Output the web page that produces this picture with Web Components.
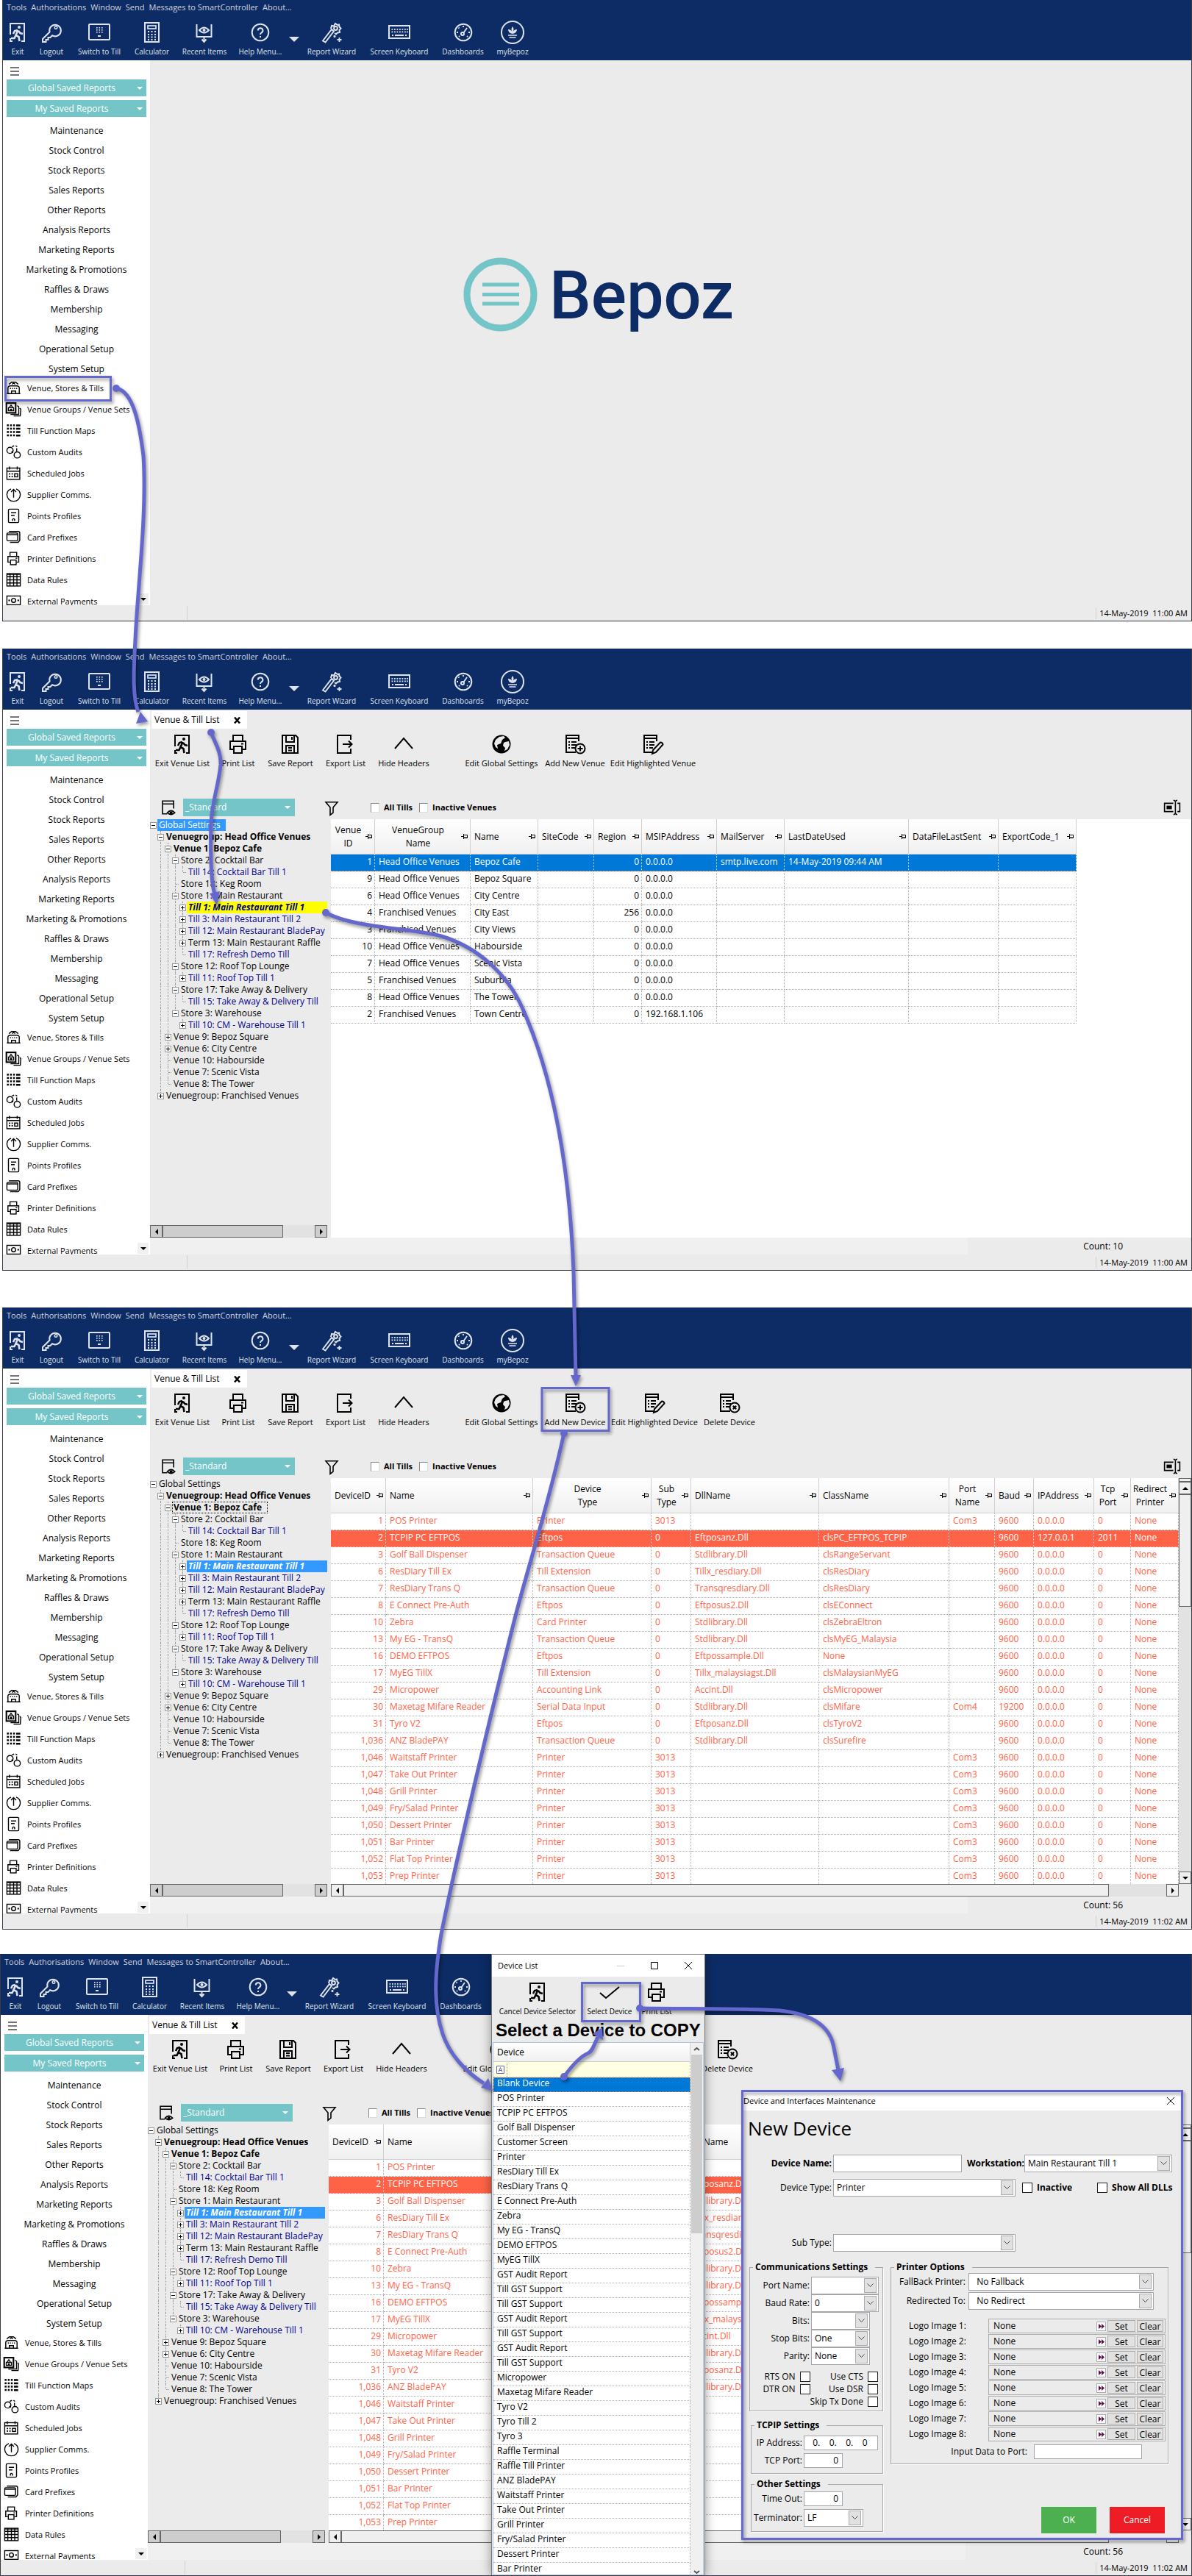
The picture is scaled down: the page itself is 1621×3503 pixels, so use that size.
<!DOCTYPE html>
<html lang="en">
<head>
<meta charset="utf-8">
<title>Bepoz BackOffice - adding a device</title>
<style>
  html, body { margin: 0; background: #fff; }
  body {
    font-family: "Open Sans", "Noto Sans", sans-serif; font-size: 12px; line-height: 16px; color: #000;
    --navy: #0d2c65; --teal: #74c5c7; --face: #ebebeb; --mark: #6468cc; --line: #b4b4b4; --small: 11px; --tiny: 10px;
  }
</style>
</head>
<body>
<bz-guide></bz-guide>

<script>
const RESET = `
  *{box-sizing:border-box}
  :host{display:block;box-sizing:border-box}
  button,input,select{font:inherit;color:inherit;margin:0;padding:0;border:0;background:none;border-radius:0;appearance:none;outline:0}
  button{display:block}
  ul{list-style:none;margin:0;padding:0}
  svg{display:block}
`;
const define = (name, render) => customElements.define(name, class extends HTMLElement {
  connectedCallback() {
    if (this.shadowRoot) return;
    this.attachShadow({ mode: 'open' }).innerHTML = render(this);
  }
});

/* ---------- icons ---------- */
const dots = (xs, ys, s = 2) => ys.map(y => xs.map(x => `<rect x="${x}" y="${y}" width="${s}" height="${s}" fill="currentColor" stroke="none"/>`).join('')).join('');
const form = `<path d="M20 11V3H3v23h13M3 7h17"/><path d="M6 12h2M6 16h2M6 20h2M10 12h7M10 16h7M10 20h5"/>`;
const ICONS = {
  exit: `<path d="M5 18V3h19v24h-4M5 23v4h3"/><circle cx="17" cy="8" r="2" fill="currentColor" stroke="none"/><path d="M15.500 12l-3 7 4 2 1 6M12.500 19l-2 4H6M15 12l-4 1-2 4M16 13l2.500 3 3.500 1" stroke-width="2.600"/>`,
  logout: `<path d="M12.500 14.500L3 24v4h4.500v-3h3v-3h3l2.500-2.800a7.800 7.800 0 1 0-3.500-4.700z"/><circle cx="21" cy="8.500" r="1.800" stroke-width="1.400"/>`,
  till: `<rect x="1" y="4" width="28" height="21" rx="1"/>${dots([11, 14.5, 18], [8, 11, 14], 1.6)}<rect x="13" y="19" width="4" height="2" fill="currentColor" stroke="none"/>`,
  calc: `<rect x="5" y="2" width="19" height="26"/><rect x="9" y="6" width="11" height="4" stroke-width="1.700"/>${dots([9, 13.5, 18], [13, 17, 20.5, 24], 2)}`,
  recent: `<path d="M4.500 4v17h20V4M14.500 21v6M11.500 24.500l3 3.500 3-3.500"/><path d="M8 12q6.500-7 13 0q-6.500 7-13 0z"/><circle cx="14.500" cy="12" r="2" fill="currentColor" stroke="none"/>`,
  help: `<circle cx="15" cy="15" r="11.300"/><path d="M11.800 12.500a3.300 3.300 0 1 1 4.600 3q-1.400.8-1.400 2.500M15 20v2"/>`,
  wizard: `<path d="M3 26.500L15 11l3 2.500L6.500 28.500z"/><path d="M14 10l1-4 3 .5L20 3l3 2 2-.5.5 3 2 2-2 2.500.500 3-3 .5-2 2-2-1.500"/><circle cx="20.500" cy="9.500" r="2.400"/><path d="M19 19v3M17.500 20.500h3M25.500 22v6M22.500 25h6" stroke-width="1.800"/>`,
  keyboard: `<rect x="1" y="6" width="28" height="17"/>${dots([4.5, 8, 11.500, 15, 18.500, 22, 25], [10, 13.500], 1.8)}<path d="M5 19h2M9 19h12M23 19h2"/>`,
  gauge: `<circle cx="15" cy="15" r="11.300"/><circle cx="14" cy="17" r="2"/><path d="M15.500 15.500L20 9M15 6v2M8.500 8.500l1 1M6 15h2M22 15h2M9 21l1-1M21 21l-1-1" stroke-width="1.800"/>`,
  mybepoz: `<circle cx="15" cy="15" r="15" stroke-width="2"/><path d="M15 7q-3 4 0 8q3-4 0-8zM9 11q0 5 6 6q6-1 6-6q-4 0-6 4q-2-4-6-4z" fill="currentColor" stroke="none"/><path d="M9 19h12M10.500 22h9" stroke-width="1.700"/>`,
  print: `<path d="M8 11V3h13v8M8 22H4V11h21v11h-4"/><rect x="9" y="18" width="11" height="9"/><path d="M19 14.500h3"/>`,
  save: `<path d="M4 3h18l3 3v21H4zM9 3v9h11V3M9 27V17h11v10M12 20h5M12 23.500h5M17 5v4"/>`,
  export: `<path d="M22 9V3H4v24h18v-6M11 15h12M19 10.500l4.500 4.500-4.500 4.500"/>`,
  up: `<path d="M3 21L15 7l12 14"/>`,
  check: `<path d="M2 16l8 7L28 8"/>`,
  globe: `<circle cx="15" cy="15" r="12.500" fill="currentColor" stroke="none"/><path d="M12 5l6-1 2 2-4 3-2 5-5 2 1 5-3-2-2-5 2-5zM20 12l5-1 1 5-3 6-4 2 1-4-3-3 1-4z" fill="var(--face,#ebebeb)" stroke="none"/>`,
  add: `${form}<circle cx="22" cy="21" r="6.500" fill="var(--face,#ebebeb)"/><path d="M22 17.500v7M18.500 21h7"/>`,
  del: `${form}<circle cx="22" cy="21" r="6.500" fill="var(--face,#ebebeb)"/><path d="M19.800 18.800l4.400 4.400M24.200 18.800l-4.400 4.400"/>`,
  edit: `${form}<path d="M14 28l1-5L25 12.500q3 0 3.500 3L19 26z" fill="var(--face,#ebebeb)"/>`,
  view: `<path d="M24 17V4H5v22h8M5 9h19"/><path d="M13 24q6.500-7 13 0q-6.500 6-13 0z" fill="var(--face,#ebebeb)"/><circle cx="19.500" cy="24" r="2.500" fill="currentColor" stroke="none"/>`,
  funnel: `<path d="M5 6h20l-7.500 9v9l-5 4V15z"/>`,
  cols: `<path d="M17 8H2v14h15M24 8h4v14h-4M20.500 4v22M17.500 2.500l3 2 3-2M17.500 27.500l3-2 3 2"/><rect x="5.500" y="12" width="9" height="6" fill="currentColor" stroke="none"/>`,
  venue: `<path d="M4 26V15q0-4 5-4h12q5 0 5 4v11h-7v-5h-8v5zM2 26h26M6 8l5-4 8 0 5 4M12 8q3-4 6 0"/>${dots([8, 12, 16, 20], [15], 2)}`,
  groups: `<rect x="1" y="3" width="18" height="19" stroke-width="3"/><path d="M5 18v-6h10v6zM7 11l3-4 3 4M9 18v-3h2v3M22 8l3 2v15L9 25M27 13l2 2-1 13-13 0"/>`,
  maps: `${dots([2, 8, 14], [3, 9.500, 16, 22.500], 3.600)}<path d="M20 5h8M20 11.500h8M20 18h8M20 24.500h8" stroke-width="3.600"/>`,
  audits: `<circle cx="8" cy="12" r="6"/><circle cx="22" cy="21" r="6"/><path d="M12 5l4-2M19 3l3 2M21 8v6"/><circle cx="12.500" cy="15.500" r="1"/>`,
  jobs: `<rect x="2" y="5" width="25" height="22"/><path d="M2 11h25M7 2v6M22 2v6"/><rect x="17" y="16" width="6" height="6"/>${dots([6, 11], [15, 20], 2.600)}`,
  supplier: `<path d="M10 4q-8 3-8 11.500A12.500 12.500 0 0 0 15 28a12.500 12.500 0 0 0 13-12.500Q28 7 20 4M15 21V5M10 10l5-5 5 5"/>`,
  points: `<rect x="5" y="2" width="20" height="26" rx="2"/><path d="M10 9h10M10 14h7M13 25v-3q2-3 4 0v3"/>`,
  cards: `<path d="M6 4h18q3 0 3 3M27 7v14l-3 4H8"/><rect x="2" y="7" width="21" height="15" rx="2"/><path d="M2 10h21"/>`,
  rules: `<rect x="2" y="3" width="26" height="24" /><path d="M2 9h26M2 15h26M2 21h26M8 3v24M15 3v24M21.500 3v24M2 4.500h26"/>`,
  pay: `<rect x="2" y="5" width="26" height="17"/><circle cx="15" cy="13.500" r="4"/>${dots([5, 22.500], [12], 3)}<path d="M10 26h10"/>`
};
define('bz-icon', el => `<style>${RESET}svg{width:100%;height:100%;overflow:visible}</style>
  <svg viewBox="0 0 30 30" fill="none" stroke="currentColor" stroke-width="2" aria-hidden="true">${ICONS[el.getAttribute('name')] || ''}</svg>`);

/* ---------- icon-over-label button ---------- */
define('bz-tool', el => `<style>${RESET}
  :host{width:var(--w);flex:none;font-size:var(--tool,var(--small))}
  button{width:100%;display:flex;flex-direction:column;align-items:center;gap:3px;white-space:nowrap;line-height:16px}
  bz-icon{width:30px;height:30px}
  span{display:block}
  </style><button type="button"><bz-icon name="${el.getAttribute('icon')}"></bz-icon><span><slot></slot></span></button>`);
const tool = ([icon, label, w]) => icon ? `<bz-tool icon="${icon}" style="--w:${w}px">${label}</bz-tool>` : `<i style="width:${w}px" class="${label}"></i>`;

/* ---------- top bar ---------- */
define('bz-topbar', () => `<style>${RESET}
  :host{background:var(--navy);color:#dfe3ec;height:83px}
  nav{display:flex;gap:6px;padding:0 5px;height:22px;align-items:center;font-size:var(--small);color:#cfd4df}
  .tools{display:flex;padding-top:8px;--tool:var(--tiny)}
  .arrow{align-self:center;margin-bottom:8px;height:0;display:flex;justify-content:center}
  .arrow::before{content:"";border:7px solid transparent;border-top:7px solid #dfe3ec;border-bottom:0}
  </style>
  <nav>${['Tools', 'Authorisations', 'Window', 'Send', 'Messages to SmartController', 'About...'].map(t => `<button type="button">${t}</button>`).join('')}</nav>
  <div class="tools">${[['exit', 'Exit', 40], ['logout', 'Logout', 52], ['till', 'Switch to Till', 78], ['calc', 'Calculator', 65], ['recent', 'Recent Items', 78], ['help', 'Help Menu...', 74],
    ['', 'arrow', 17], ['wizard', 'Report Wizard', 86], ['keyboard', 'Screen Keyboard', 98], ['gauge', 'Dashboards', 75], ['mybepoz', 'myBepoz', 60]].map(tool).join('')}</div>`);

/* ---------- left menu ---------- */
const CATS = ['Maintenance', 'Stock Control', 'Stock Reports', 'Sales Reports', 'Other Reports', 'Analysis Reports', 'Marketing Reports', 'Marketing &amp; Promotions', 'Raffles &amp; Draws', 'Membership', 'Messaging', 'Operational Setup', 'System Setup'];
const ITEMS = [['venue', 'Venue, Stores &amp; Tills'], ['groups', 'Venue Groups / Venue Sets'], ['maps', 'Till Function Maps'], ['audits', 'Custom Audits'], ['jobs', 'Scheduled Jobs'], ['supplier', 'Supplier Comms.'],
  ['points', 'Points Profiles'], ['cards', 'Card Prefixes'], ['print', 'Printer Definitions'], ['rules', 'Data Rules'], ['pay', 'External Payments']];
define('bz-sidebar', () => `<style>${RESET}
  :host{background:#fff;width:200px;flex:none;position:relative;overflow:hidden}
  .burger{display:grid;gap:3px;width:12px;margin:9px 10px 5px}
  .burger i{height:2px;background:#757575}
  .saved{width:190px;height:23px;margin:0 5px 5px;background:var(--teal);color:#fff;display:flex;align-items:center;padding-right:5px}
  .saved span{flex:1;text-align:center}
  .saved::after,.down::before{content:"";border:4px solid transparent;border-top:4px solid #fff;border-bottom:0}
  .cats{margin-bottom:-2px}
  .cats button{width:100%;height:27px;text-align:center}
  .items button{display:flex;align-items:center;gap:8px;width:100%;height:29px;padding-left:4px;font-size:var(--small);white-space:nowrap}
  .items bz-icon{width:21px;height:21px;flex:none}
  .down{position:absolute;right:2px;bottom:1px;width:15px;height:15px;background:#f0f0f0;display:grid;place-items:center}
  .down::before{border-top-color:#000}
  </style>
  <button class="burger" type="button" aria-label="Menu"><i></i><i></i><i></i></button>
  <button class="saved" type="button"><span>Global Saved Reports</span></button>
  <button class="saved" type="button"><span>My Saved Reports</span></button>
  <ul class="cats">${CATS.map(c => `<li><button type="button">${c}</button></li>`).join('')}</ul>
  <ul class="items">${ITEMS.map(([i, t]) => `<li><button type="button"><bz-icon name="${i}"></bz-icon>${t}</button></li>`).join('')}</ul>
  <button class="down" type="button" aria-label="Scroll down"></button>`);

/* ---------- application window ---------- */
define('bz-window', el => `<style>${RESET}
  :host{height:846px;background:var(--face);border:1px solid #3a3a44;border-top:0;display:flex;flex-direction:column;position:relative;overflow:hidden}
  .mid{flex:1;display:flex;min-height:0}
  .main{flex:1;min-width:0;display:flex;flex-direction:column}
  footer{height:21px;display:flex;align-items:center;justify-content:space-between;font-size:var(--small);white-space:nowrap}
  footer::before{content:"";width:250px;height:19px;border-right:1px solid #d2d2d2}
  footer span{border-left:1px solid #d2d2d2;padding:0 5px 0 4px}
  </style>
  <bz-topbar></bz-topbar>
  <div class="mid"><bz-sidebar></bz-sidebar><div class="main"><slot></slot></div></div>
  <footer><span>14-May-2019&nbsp; ${el.getAttribute('time')}</span></footer>
  <slot name="dialog"></slot>`);

define('bz-logo', () => `<style>${RESET}
  :host{flex:1;display:flex;align-items:flex-start;justify-content:center;gap:16px;padding:268px 196px 0 0;color:var(--navy)}
  svg{width:101px;height:101px;flex:none}
  b{font:500 90px/106px Roboto,sans-serif}
  </style><svg viewBox="0 0 101 101" fill="none" stroke="#74c5c7" aria-hidden="true"><circle cx="50.500" cy="50.500" r="45.500" stroke-width="9"/><path d="M26 37h50M26 50.500h50M26 63h50" stroke-width="5"/></svg><b>Bepoz</b>`);

/* ---------- scroll bar: start and size of the thumb in pixels ---------- */
define('bz-scroll', el => {
  const v = el.hasAttribute('vertical');
  return `<style>${RESET}
  :host{display:flex;flex-direction:${v ? 'column' : 'row'};${v ? 'width' : 'height'}:17px;background:#e2e2e2;flex:none}
  i{flex:none;background:var(--thumb,#efefef);border:1px solid #666}
  .b{width:17px;height:17px;display:grid;place-items:center}
  .b::before{content:"";border:4px solid transparent}
  .s::before{border-${v ? 'bottom' : 'right'}-color:#000;border-${v ? 'top' : 'left'}-width:0}
  .e::before{border-${v ? 'top' : 'left'}-color:#000;border-${v ? 'bottom' : 'right'}-width:0}
  .t{${v ? 'height' : 'width'}:${el.getAttribute('thumb')}}
  em{flex:1}
  </style>${v ? '<i style="height:5px"></i>' : ''}<i class="b s"></i><i class="t"></i><em></em><i class="b e"></i>`;
});

/* ---------- tree ---------- */
const TREE = [
  [0, '-', 'Global Settings'], [1, '-', 'Venuegroup: Head Office Venues', 'bold'], [2, '-', 'Venue 1: Bepoz Cafe', 'bold cafe'],
  [3, '-', 'Store 2: Cocktail Bar'], [4, '', 'Till 14: Cocktail Bar Till 1', 'till'], [3, '', 'Store 18: Keg Room'], [3, '-', 'Store 1: Main Restaurant'],
  [4, '+', 'Till 1: Main Restaurant Till 1', 'till current'], [4, '+', 'Till 3: Main Restaurant Till 2', 'till'], [4, '+', 'Till 12: Main Restaurant BladePay', 'till'],
  [4, '+', 'Term 13: Main Restaurant Raffle'], [4, '', 'Till 17: Refresh Demo Till', 'till'], [3, '-', 'Store 12: Roof Top Lounge'], [4, '+', 'Till 11: Roof Top Till 1', 'till'],
  [3, '-', 'Store 17: Take Away &amp; Delivery'], [4, '', 'Till 15: Take Away &amp; Delivery Till', 'till'], [3, '-', 'Store 3: Warehouse'], [4, '+', 'Till 10: CM - Warehouse Till 1', 'till'],
  [2, '+', 'Venue 9: Bepoz Square'], [2, '+', 'Venue 6: City Centre'], [2, '', 'Venue 10: Habourside'], [2, '', 'Venue 7: Scenic Vista'], [2, '', 'Venue 8: The Tower'], [1, '+', 'Venuegroup: Franchised Venues']
];
const continues = (row, level) => {
  for (let r = row + 1; r < TREE.length && TREE[r][0] >= level; r++) if (TREE[r][0] === level) return true;
  return false;
};
define('bz-tree', el => `<style>${RESET}
  :host{width:241px;flex:none;display:flex;flex-direction:column;overflow:hidden;margin-right:5px}
  ul{flex:1}
  li{display:flex;height:16px;white-space:nowrap}
  .g{width:10px;flex:none;position:relative}
  .v::before{content:"";position:absolute;left:4px;top:0;bottom:0;border-left:1px dotted #999}
  .last::before{bottom:8px}
  .leaf::after{content:"";position:absolute;left:5px;right:1px;top:8px;border-top:1px dotted #999}
  .box{position:absolute;left:0;top:4px;width:9px;height:9px;border:1px solid #999;background:#fff}
  .box::before,.box.plus::after{content:"";position:absolute;background:#000;left:1px;top:3px;width:5px;height:1px}
  .box.plus::after{left:3px;top:1px;width:1px;height:5px}
  .t{padding:0 2px;line-height:15px}
  .bold .t{font-weight:700}
  .till .t{color:#00008b}
  .current .t{flex:1;font-weight:700;font-style:italic;background:#ff0}
  .sel0 .root .t{background:#39f;color:#fff;padding-right:7px}
  .sel1 .current .t{background:#39f;color:#fff}
  .focus .cafe .t{outline:1px dotted #000;outline-offset:-1px;padding-right:8px}
  bz-scroll{--thumb:#cdcdcd}
  </style><ul class="${el.getAttribute('state')}">${TREE.map(([lv, sign, text, cls = ''], r) => {
    let g = '';
    for (let k = 0; k < lv; k++) g += `<span class="g ${k && continues(r, k) ? 'v' : ''}"></span>`;
    g += `<span class="g ${lv ? 'v' : ''} ${continues(r, lv) ? '' : 'last'} ${sign ? '' : 'leaf'}">${sign ? `<i class="box ${sign === '+' ? 'plus' : ''}"></i>` : ''}</span>`;
    return `<li class="${cls} ${lv ? '' : 'root'}">${g}<span class="t">${text}</span></li>`;
  }).join('')}</ul><bz-scroll thumb="164px"></bz-scroll>`);

/* ---------- data grid ---------- */
const h = (w, label, opt = '') => ({ w, label, opt });
const VENUES = {
  cols: [h(60, 'Venue<br>ID', 'c r'), h(130, 'VenueGroup<br>Name', 'c'), h(92, 'Name'), h(76, 'SiteCode'), h(65, 'Region', 'r'), h(102, 'MSIPAddress'), h(92, 'MailServer'), h(169, 'LastDateUsed'), h(122, 'DataFileLastSent'), h(106, 'ExportCode_1')],
  rows: [[1, 'H', 'Bepoz Cafe', 0, '0.0.0.0', 'smtp.live.com', '14-May-2019 09:44 AM'], [9, 'H', 'Bepoz Square'], [6, 'H', 'City Centre'], [4, 'F', 'City East', 256], [3, 'F', 'City Views'], [10, 'H', 'Habourside'],
    [7, 'H', 'Scenic Vista'], [5, 'F', 'Suburbia'], [8, 'H', 'The Tower'], [2, 'F', 'Town Centre', 0, '192.168.1.106']]
    .map(([id, g, n, reg = 0, ip = '0.0.0.0', mail = '', last = '']) => [id, g === 'H' ? 'Head Office Venues' : 'Franchised Venues', n, '', reg, ip, mail, last, '', '']),
  selected: 0
};
const dev = (id, n, type, dll = '', cls = '', port = '', baud = '9600', ip = '0.0.0.0', tcp = '0') => [id, n, type, dll ? '0' : '3013', dll, cls, port, baud, ip, tcp, 'None'];
const prn = (id, n) => dev(id, n, 'Printer', '', '', 'Com3');
const DEVICES = {
  cols: [h(75, 'DeviceID', 'r'), h(200, 'Name'), h(161, 'Device<br>Type', 'c'), h(54, 'Sub<br>Type', 'c'), h(174, 'DllName'), h(177, 'ClassName'), h(62, 'Port<br>Name', 'c'), h(53, 'Baud'), h(82, 'IPAddress'), h(50, 'Tcp<br>Port', 'c'), h(0, 'Redirect<br>Printer', 'c')],
  rows: [prn(1, 'POS Printer'), dev(2, 'TCPIP PC EFTPOS', 'Eftpos', 'Eftposanz.Dll', 'clsPC_EFTPOS_TCPIP', '', '9600', '127.0.0.1', '2011'),
    dev(3, 'Golf Ball Dispenser', 'Transaction Queue', 'Stdlibrary.Dll', 'clsRangeServant'), dev(6, 'ResDiary Till Ex', 'Till Extension', 'Tillx_resdiary.Dll', 'clsResDiary'),
    dev(7, 'ResDiary Trans Q', 'Transaction Queue', 'Transqresdiary.Dll', 'clsResDiary'), dev(8, 'E Connect Pre-Auth', 'Eftpos', 'Eftposus2.Dll', 'clsEConnect'),
    dev(10, 'Zebra', 'Card Printer', 'Stdlibrary.Dll', 'clsZebraEltron'), dev(13, 'My EG - TransQ', 'Transaction Queue', 'Stdlibrary.Dll', 'clsMyEG_Malaysia'),
    dev(16, 'DEMO EFTPOS', 'Eftpos', 'Eftpossample.Dll', 'None'), dev(17, 'MyEG TillX', 'Till Extension', 'Tillx_malaysiagst.Dll', 'clsMalaysianMyEG'),
    dev(29, 'Micropower', 'Accounting Link', 'Accint.Dll', 'clsMicropower'), dev(30, 'Maxetag Mifare Reader', 'Serial Data Input', 'Stdlibrary.Dll', 'clsMifare', 'Com4', '19200'),
    dev(31, 'Tyro V2', 'Eftpos', 'Eftposanz.Dll', 'clsTyroV2'), dev('1,036', 'ANZ BladePAY', 'Transaction Queue', 'Stdlibrary.Dll', 'clsSurefire'),
    ...['Waitstaff', 'Take Out', 'Grill', 'Fry/Salad', 'Dessert', 'Bar', 'Flat Top', 'Prep'].map((n, i) => prn('1,0' + (46 + i), n + ' Printer'))],
  selected: 1
};
const PIN = `<svg width="9" height="9" viewBox="0 0 9 9" fill="none" stroke="#000" aria-hidden="true"><path d="M0 4.500h3M3.500 1v7M3.500 2.500h5v4h-5" /><path d="M3.500 6h5"/></svg>`;
define('bz-grid', el => {
  const devices = el.getAttribute('kind') === 'devices', d = devices ? DEVICES : VENUES;
  return `<style>${RESET}
  :host{flex:1;min-width:0;background:#fff;display:flex;overflow:hidden}
  .col{flex:1;min-width:0;display:flex;flex-direction:column}
  .view{flex:1;min-height:0;overflow:hidden}
  table{border-collapse:separate;border-spacing:0;table-layout:fixed;width:${devices ? '100%' : d.cols.reduce((s, c) => s + c.w, 0) + 'px'}}
  th{height:48px;padding:0 3px 0 5px;font-weight:400;text-align:left;background:linear-gradient(#fff,#f0f0f0);border-right:1px solid #d0d0d0;border-bottom:1px solid #d0d0d0;line-height:18px;white-space:nowrap}
  th div{display:flex;align-items:center;gap:2px} th span{flex:1} th svg{flex:none}
  th.c{padding-left:2px} th.c span{text-align:center}
  td{height:23px;padding:0 0 3px 5px;line-height:18px;white-space:nowrap;overflow:hidden;border-right:1px dotted #b0b0b0;border-bottom:1px dotted #b0b0b0}
  td.r{text-align:right;padding:0 3px 3px 0}
  .devices td{color:#ff6347}
  .sel td{background:#0078d7;color:#fff;border-bottom-color:#e8853a;border-right-color:#cde}
  .devices .sel td{background:#ff6347;color:#fff;border-bottom-color:#ffb0a0}
  .side{width:17px;display:flex;flex-direction:column}.side bz-scroll{flex:1}.side::after{content:"";height:17px;background:var(--face)}
  </style><div class="col"><div class="view"><table class="${devices ? 'devices' : ''}">
  <colgroup>${d.cols.map(c => `<col${c.w ? ` style="width:${c.w}px"` : ''}>`).join('')}</colgroup>
  <thead><tr>${d.cols.map(c => `<th class="${c.opt.includes('c') ? 'c' : ''}"><div><span>${c.label}</span>${PIN}</div></th>`).join('')}</tr></thead>
  <tbody>${d.rows.map((r, i) => `<tr class="${i === d.selected ? 'sel' : ''}">${r.map((v, k) => `<td class="${d.cols[k].opt.includes('r') ? 'r' : ''}">${v}</td>`).join('')}</tr>`).join('')}</tbody>
  </table></div>${devices ? '<bz-scroll thumb="calc(100% - 112px)"></bz-scroll>' : ''}</div>${devices ? '<div class="side"><bz-scroll vertical thumb="153px"></bz-scroll></div>' : ''}`;
});

/* ---------- Venue & Till List page ---------- */
define('bz-venues', el => {
  const devices = el.getAttribute('kind') === 'devices';
  const tools = [['exit', 'Exit Venue List', 88], ['print', 'Print List', 64], ['save', 'Save Report', 78], ['export', 'Export List', 72], ['up', 'Hide Headers', 86], ['', '', 32], ['globe', 'Edit Global Settings', 116]]
    .concat(devices ? [['add', 'Add New Device', 84], ['edit', 'Edit Highlighted Device', 132], ['del', 'Delete Device', 72]] : [['add', 'Add New Venue', 84], ['edit', 'Edit Highlighted Venue', 128]]);
  return `<style>${RESET}
  :host{flex:1;min-height:0;display:flex;flex-direction:column;padding-top:2px}
  .tab{display:flex;align-items:center;width:130px;height:24px;margin-left:2px;padding:0 4px;background:#fff;gap:20px;white-space:nowrap}
  .tab svg{width:9px;height:9px}
  .tools{display:flex;padding-top:6px;height:95px}
  .filter{display:flex;align-items:center;height:24px;margin-bottom:4px;font-weight:700;white-space:nowrap;font-size:var(--small)}
  .filter>bz-icon{width:24px;height:24px;flex:none}
  .filter>.view{margin:0 8px 0 13px}
  .std{display:flex;align-items:center;width:152px;height:24px;background:var(--teal);color:#fff;padding:0 6px 0 3px;font-weight:400;font-size:12px}
  .std select{flex:1;height:24px;line-height:22px}.std::after{content:"";border:4px solid transparent;border-top:4px solid #fff;border-bottom:0}
  .filter>.fun{margin:0 41px 0 38px}
  label{display:flex;align-items:center;gap:6px;margin-right:9px}
  input{width:12px;height:13px;background:#fff;border:1px solid #888;border-right-color:#ddd;border-bottom-color:#ddd}
  .filter>.right{margin:0 14px 0 auto}
  .body{flex:1;display:flex;min-height:0}
  .count{height:23px;background:linear-gradient(90deg,#f0f0f0 1112px,transparent 0);display:flex;justify-content:flex-end;align-items:center;padding-right:93px}
  </style>
  <div class="tab"><span>Venue &amp; Till List</span><svg viewBox="0 0 9 9" stroke="#000" stroke-width="2.400" aria-hidden="true"><path d="M1 .5l7 8M8 .5l-7 8"/></svg></div>
  <div class="tools">${tools.map(tool).join('')}</div>
  <div class="filter"><bz-icon class="view" name="view"></bz-icon><span class="std"><select aria-label="Layout"><option>_Standard</option></select></span><bz-icon class="fun" name="funnel"></bz-icon>
    <label><input type="checkbox">All Tills</label><label><input type="checkbox">Inactive Venues</label><bz-icon class="right" name="cols"></bz-icon></div>
  <div class="body"><bz-tree state="${el.getAttribute('state')}"></bz-tree><bz-grid kind="${el.getAttribute('kind')}"></bz-grid></div>
  <div class="count"><span>Count: ${devices ? 56 : 10}</span></div>`;
});

/* ---------- Device List dialog ---------- */
const CLOSE = `<svg width="12" height="12" viewBox="0 0 12 12" stroke="#000" aria-hidden="true"><path d="M1 1l10 10M11 1L1 11"/></svg>`;
const LIST = ['Blank Device', 'POS Printer', 'TCPIP PC EFTPOS', 'Golf Ball Dispenser', 'Customer Screen', 'Printer', 'ResDiary Till Ex', 'ResDiary Trans Q', 'E Connect Pre-Auth', 'Zebra', 'My EG - TransQ', 'DEMO EFTPOS', 'MyEG TillX',
  'GST Audit Report', 'Till GST Support', 'Till GST Support', 'GST Audit Report', 'Till GST Support', 'GST Audit Report', 'Till GST Support', 'Micropower', 'Maxetag Mifare Reader', 'Tyro V2', 'Tyro Till 2', 'Tyro 3',
  'Raffle Terminal', 'Raffle Till Printer', 'ANZ BladePAY', 'Waitstaff Printer', 'Take Out Printer', 'Grill Printer', 'Fry/Salad Printer', 'Dessert Printer', 'Bar Printer'];
define('bz-device-list', () => `<style>${RESET}
  :host{position:absolute;left:667px;top:0;bottom:0;width:291px;background:var(--face);border:1px solid #777;border-bottom:0;box-shadow:0 2px 14px #0006;display:flex;flex-direction:column;overflow:hidden}
  header{display:flex;align-items:center;height:30px;flex:none;background:#fff;padding:0 16px 0 8px;font-size:var(--small)}
  header span{flex:1}
  header button{width:46px;display:grid;justify-content:end}
  .tools{display:flex;padding:6px 0 0 1px;flex:none;--tool:var(--tiny)}
  h2{font:700 24px/28px "Liberation Sans",Arial,sans-serif;margin:4px 0 2px 5px;white-space:nowrap;flex:none}
  .list{display:flex;flex:1;min-height:0;border:1px solid #a9c6e6;margin:0 1px}
  .view{flex:1;overflow:hidden;background:#fff}
  table{width:100%;border-collapse:separate;border-spacing:0}
  th{height:26px;text-align:left;font-weight:400;background:linear-gradient(#fff,#f0f0f0);border-bottom:1px solid #d0d0d0;border-right:1px solid #d0d0d0;padding:0 5px}
  td{height:20px;padding:0 5px 3px;line-height:16px;border-bottom:1px dotted #b0b0b0;border-right:1px dotted #b0b0b0;white-space:nowrap}
  .find td{background:#ffffe1;height:21px;padding:0 4px}
  .find i{display:block;width:15px;height:19px;border-right:1px dotted #999;padding:4px 4px 0 0}
  .sel td{background:#0078d7;color:#fff;outline:1px dotted #e8853a;outline-offset:-1px}
  .bar{width:17px;background:#f0f0f0;display:flex;flex-direction:column;align-items:center;padding-top:5px}
  .bar b{width:15px;height:243px;background:#cdcdcd;margin:4px 0 auto}
  </style>
  <header><span>Device List</span><button type="button" aria-label="Minimise"><svg width="12" height="12" viewBox="0 0 12 12" stroke="#ccc"><path d="M1 6.500h10"/></svg></button><button type="button" aria-label="Maximise"><svg width="12" height="12" viewBox="0 0 12 12" fill="none" stroke="#000"><path d="M1.500 1.500h9v9h-9z"/></svg></button><button type="button" aria-label="Close">${CLOSE}</button></header>
  <div class="tools">${[['exit', 'Cancel Device Selector', 122], ['check', 'Select Device', 74], ['print', 'Print List', 54]].map(tool).join('')}</div>
  <h2>Select a Device to COPY</h2>
  <div class="list"><div class="view"><table><thead><tr><th>Device</th></tr></thead><tbody>
    <tr class="find"><td><i><svg width="11" height="11" viewBox="0 0 11 11" fill="none" stroke="#5a62c8"><path d="M.5.500h10v10H.5zM3 8.500L5.500 2.500 8 8.500M4 6.500h3"/></svg></i></td></tr>
    ${LIST.map((t, i) => `<tr class="${i ? '' : 'sel'}"><td>${t}</td></tr>`).join('')}</tbody></table></div>
    <div class="bar"><svg width="9" height="7" viewBox="0 0 9 7" fill="none" stroke="#555" stroke-width="2"><path d="M1 5l3.500-3L8 5"/></svg><b></b><svg width="9" height="7" viewBox="0 0 9 7" fill="none" stroke="#555" stroke-width="2"><path d="M1 2l3.500 3L8 2"/></svg></div></div>`);

/* ---------- New Device dialog ---------- */
let uid = 0;
const pick = (label, value, w, cls = '') => { const id = 'f' + ++uid; return `<label class="l" for="${id}">${label}</label><span class="pick ${cls}" style="width:${w}px"><select id="${id}"><option>${value}</option></select><i><svg width="9" height="6" viewBox="0 0 9 6" fill="none" stroke="#444"><path d="M.5.500l4 4 4-4"/></svg></i></span>`; };
const box = (label, value, w, cls = '') => { const id = 'f' + ++uid; return `<label class="l" for="${id}">${label}</label><input class="box ${cls}" id="${id}" type="text" value="${value}" style="width:${w}px">`; };
define('bz-device-form', () => `<style>${RESET}
  :host{position:absolute;left:1007px;top:186px;width:601px;height:611px;background:var(--face);border:1px solid #777;padding-bottom:1px}
  header{display:flex;align-items:center;justify-content:space-between;height:26px;background:#fff;padding:0 10px 0 2px;font-size:var(--small)}
  h2{font-size:26px;line-height:36px;font-weight:400;margin:6px 0 18px 8px}
  .row{display:flex;align-items:center;height:24px;gap:2px;margin-bottom:9px}
  .l{white-space:nowrap;text-align:right;width:var(--lw);flex:none}
  .b .l,.chk{font-weight:700}
  .wide{--lw:122px}
  .pick{display:flex;align-items:center;height:24px;border:1px solid #a5a5ad;background:#fff;padding:1px 2px 1px 4px;flex:none;font-weight:400}
  .pick select{flex:1;min-width:0;height:100%}
  .pick i{width:17px;height:20px;background:#e1e1e1;border:1px solid #adadad;display:grid;place-items:center}
  .box{height:20px;border:1px solid #a5a5ad;background:#fff;padding:0 5px;flex:none}
  .tall{height:24px}.num{text-align:right}
  .chk{display:flex;align-items:center;gap:6px;white-space:nowrap}
  input[type=checkbox]{width:14px;height:14px;border:1px solid #222;background:#fff;flex:none}
  .cols{display:flex;gap:10px;padding:0 19px 0 10px;align-items:flex-start}
  .left{width:182px}.right{flex:1}
  fieldset{border:1px solid #a8a8a8;box-shadow:1px 1px 0 #fff;margin:0;padding:0;min-width:0}
  .left fieldset+fieldset{margin-left:2px}
  legend{font-weight:700;line-height:16px;padding:0 10px 0 3px;margin-left:4px}
  fieldset .row{margin:0}
  .comm{padding:5px 0 4px;--lw:81px;margin-bottom:11px}
  .checks{display:grid;grid-template-columns:1fr 1fr;row-gap:1px;padding:8px 6px 0 0;justify-items:end}
  .checks .chk{font-weight:400;height:16px}
  .tcp{padding:5px 0 7px;--lw:69px;margin-bottom:6px}
  .tcp .row,.other .row{height:21px}
  .tcp .row+.row{margin-top:3px}
  .other{padding:1px 0 6px;--lw:69px}.other .row+.row{height:24px;margin-top:4px}
  .opts{--lw:101px;padding-bottom:6px}
  .opts .row{gap:4px;margin-bottom:2px}
  .logos{display:grid;padding:10px 3px 3px 24px}
  .logo{display:flex;justify-content:space-between;height:21px;line-height:20px}
  .logo>span:last-child{display:flex;align-items:center;gap:2px;width:241px;height:20px;border:1px solid #adadad;padding:0 2px 0 6px;line-height:16px}
  .logo em{flex:1;font-style:normal}
  .logo button{height:16px;border:1px solid #adadad;background:#e1e1e1;line-height:13px;text-align:center}
  .logo .go{width:13px;height:13px;background:#fff;display:grid;place-items:center}
  .opts .port{height:20px;gap:9px;--lw:auto;justify-content:flex-end;padding-right:35px;margin:0}
  footer{display:flex;justify-content:flex-end;gap:18px;padding:0 5px 0 0;margin-top:58px}
  footer button{width:75px;height:36px;color:#fff;text-align:center;background:#4caf50}
  footer .no{background:#ee1c25}
  </style>
  <header><span>Device and Interfaces Maintenance</span><button type="button" aria-label="Close">${CLOSE}</button></header>
  <h2>New Device</h2>
  <div class="row wide b">${box('Device Name:', '', 175, 'tall')}<span style="width:3px"></span><span style="--lw:76px;display:flex;align-items:center;gap:2px">${pick('Workstation:', 'Main Restaurant Till 1', 201)}</span></div>
  <div class="row wide">${pick('Device Type:', 'Printer', 248)}<label class="chk" style="margin:0 32px 0 7px"><input type="checkbox">Inactive</label><label class="chk"><input type="checkbox">Show All DLLs</label></div>
  <div class="row wide" style="margin:51px 0 13px">${pick('Sub Type:', '', 248)}</div>
  <div class="cols">
    <div class="left">
      <fieldset class="comm"><legend>Communications Settings</legend>
        <div class="row">${pick('Port Name:', '', 92)}</div><div class="row">${pick('Baud Rate:', '0', 92)}</div><div class="row">${pick('Bits:', '', 80)}</div><div class="row">${pick('Stop Bits:', 'One', 80)}</div><div class="row">${pick('Parity:', 'None', 80)}</div>
        <div class="checks"><label class="chk">RTS ON<input type="checkbox"></label><label class="chk">Use CTS<input type="checkbox"></label><label class="chk">DTR ON<input type="checkbox"></label><label class="chk">Use DSR<input type="checkbox"></label><span></span><label class="chk">Skip Tx Done<input type="checkbox"></label></div>
      </fieldset>
      <fieldset class="tcp"><legend>TCPIP Settings</legend><div class="row">${box('IP Address:', '&nbsp; 0.&nbsp;&nbsp;  0.&nbsp;&nbsp;  0.&nbsp;&nbsp;  0', 101)}</div><div class="row">${box('TCP Port:', '0', 53, 'num')}</div></fieldset>
      <fieldset class="other"><legend>Other Settings</legend><div class="row">${box('Time Out:', '0', 53, 'num')}</div><div class="row">${pick('Terminator:', 'LF', 81)}</div></fieldset>
    </div>
    <div class="right">
      <fieldset class="opts"><legend>Printer Options</legend>
        <div class="row">${pick('FallBack Printer:', '&nbsp; No Fallback', 252)}</div><div class="row">${pick('Redirected To:', '&nbsp; No Redirect', 252)}</div>
        <div class="logos">${[1, 2, 3, 4, 5, 6, 7, 8].map(n => `<div class="logo"><span>Logo Image ${n}:</span><span><em>None</em><button class="go" type="button" aria-label="Browse"><svg width="8" height="7" viewBox="0 0 8 7" fill="#5c1049"><path d="M0 0l4 3.500L0 7zM4 0l4 3.500L4 7z"/></svg></button><button type="button" style="width:38px">Set</button><button type="button" style="width:36px">Clear</button></span></div>`).join('')}</div>
        <div class="row port">${box('Input Data to Port:', '', 147)}</div>
      </fieldset>
      <footer><button type="button">OK</button><button class="no" type="button">Cancel</button></footer>
    </div>
  </div>`);

/* ---------- callout boxes and arrows laid over the windows ---------- */
define('bz-callouts', () => `<style>${RESET}
  :host{position:absolute;left:0;top:0;width:1621px;height:3503px;pointer-events:none}
  svg{width:100%;height:100%;filter:drop-shadow(2px 3px 2px #0006)}
  </style><svg viewBox="0 0 1621 3503" fill="none" stroke="#6468cc" stroke-width="5" aria-hidden="true">
  <g stroke-width="3"><path d="M7.500 512.500h143v32h-143zM737 1887.500h91v58h-91zM791.500 2696.500h79v52h-79zM1009.500 2843.500h598v609h-598z"/></g>
  <path d="M158 528C182 532 190 580 195 620C200 700 187 800 184 870C181 920 181 950 188 968"/>
  <path d="M287 996C292 1010 301 1022 300 1040C297 1070 288 1090 287 1120C286 1160 287 1200 292 1216"/>
  <path d="M443 1241C480 1262 560 1262 600 1273C650 1288 690 1325 710 1370C755 1470 775 1600 780 1730L783 1872"/>
  <path d="M767 1949C745 2050 718 2130 699 2205C670 2320 620 2530 600 2630C590 2690 590 2730 602 2766C612 2795 634 2818 658 2833"/>
  <path d="M767 2824C780 2806 790 2796 800 2792C806 2789 808 2780 813 2770" />
  <path d="M870 2731C940 2732 1010 2731 1060 2734C1100 2738 1126 2752 1133 2780C1136 2795 1138 2805 1140 2815"/>
  <g fill="#6468cc" stroke="none"><circle cx="158" cy="528" r="5"/><circle cx="287" cy="996" r="5"/><circle cx="443" cy="1241" r="5"/><circle cx="767" cy="1949" r="5"/><circle cx="767" cy="2824" r="5"/><circle cx="870" cy="2731" r="5"/>
  <path d="M201 981l-10-13-6 16zM295 1231l-10-16 14-3zM783 1885l-7-15h14zM670 2843l-16-4 10-13zM819 2757l-13 9 14 8zM1143 2830l-12-15 17-3z"/></g></svg>`);

define('bz-guide', () => `<style>${RESET}
  :host{position:relative;overflow:hidden;padding-left:3px}
  .top{margin-top:-1px}.second{margin-top:37px}.third{margin-top:50px}.fourth{margin:33px 0 0 -3px}
  </style>
  <bz-window class="top" time="11:00 AM"><bz-logo></bz-logo></bz-window>
  <bz-window class="second" time="11:00 AM"><bz-venues kind="venues" state="sel0"></bz-venues></bz-window>
  <bz-window class="third" time="11:02 AM"><bz-venues kind="devices" state="sel1 focus"></bz-venues></bz-window>
  <bz-window class="fourth" time="11:02 AM"><bz-venues kind="devices" state="sel1"></bz-venues><bz-device-list slot="dialog"></bz-device-list><bz-device-form slot="dialog"></bz-device-form></bz-window>
  <bz-callouts></bz-callouts>`);
</script>
</body>
</html>
